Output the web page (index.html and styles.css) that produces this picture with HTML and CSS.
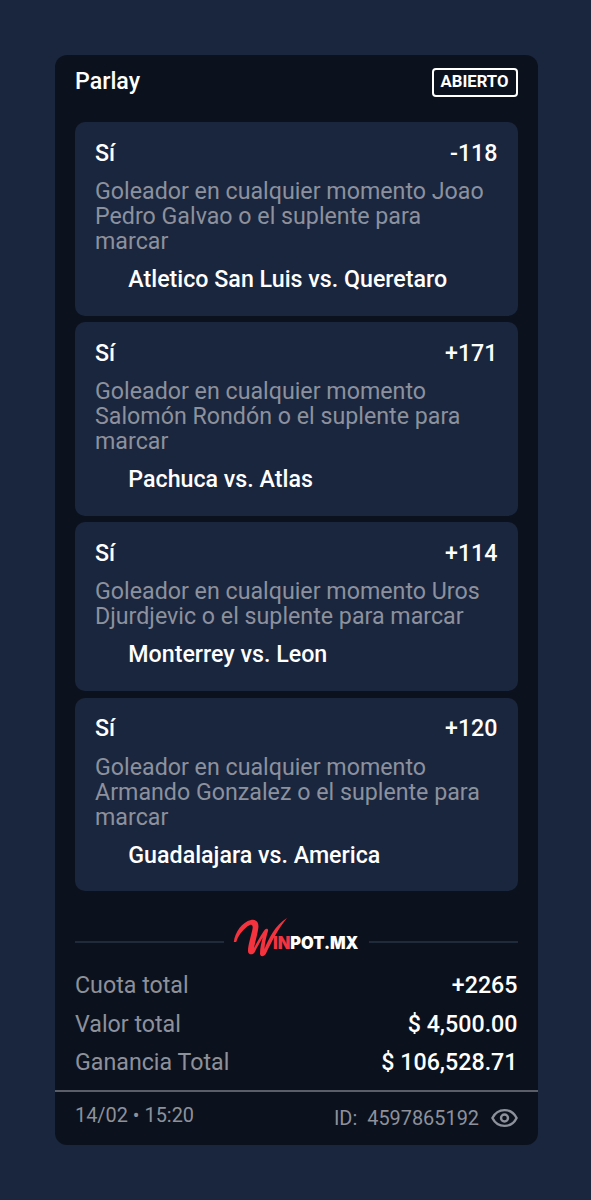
FILE: index.html
```html
<!DOCTYPE html>
<html lang="es">
<head>
    <meta charset="UTF-8">
    <meta name="viewport" content="width=device-width, initial-scale=1.0">
    <title>Parlay</title>
    <link rel="stylesheet" href="styles.css">
</head>
<body>
    <div class="ticket">
        <div class="header">
            <div class="title">Parlay</div>
            <div class="status">ABIERTO</div>
        </div>

        <div class="bets">
            <div class="bet">
                <div class="row"><span>Sí</span><span>-118</span></div>
                <div class="market">Goleador en cualquier momento Joao Pedro Galvao o el suplente para marcar</div>
                <div class="match">Atletico San Luis vs. Queretaro</div>
            </div>
            <div class="bet">
                <div class="row"><span>Sí</span><span>+171</span></div>
                <div class="market">Goleador en cualquier momento Salomón Rondón o el suplente para marcar</div>
                <div class="match">Pachuca vs. Atlas</div>
            </div>
            <div class="bet">
                <div class="row"><span>Sí</span><span>+114</span></div>
                <div class="market">Goleador en cualquier momento Uros Djurdjevic o el suplente para marcar</div>
                <div class="match">Monterrey vs. Leon</div>
            </div>
            <div class="bet">
                <div class="row"><span>Sí</span><span>+120</span></div>
                <div class="market">Goleador en cualquier momento Armando Gonzalez o el suplente para marcar</div>
                <div class="match">Guadalajara vs. America</div>
            </div>
        </div>

        <div class="brand">
            <svg class="logo" viewBox="0 0 126 42" width="126" height="42">
                <path fill="#f5333f" d="M0.800 25C2 15 9 5 18 3C24 2 26 6 25.300 11C24.500 17 22 26 21 31C24 25 28.500 17 32 12.500C33.500 11 35.700 12 35 14C33.200 20 31.800 26 31.500 32C35.500 22 42 8 54 1C45 12 38.500 25 33 36.500C31 40 27 40 27 36.500C27 31 28.500 25 29.700 20.500C26.500 26 24 30.500 21.800 35C20 38.500 15 38 15 34C15 28 18 19 19.500 12C20.300 7.500 18.500 6.300 14.500 9.300C9 13.500 5 19 3.200 25Z"/>
                <text x="40" y="31.600" textLength="85.500" lengthAdjust="spacingAndGlyphs"><tspan class="logo-in">IN</tspan>POT.MX</text>
            </svg>
        </div>

        <div class="totals">
            <div class="total"><span>Cuota total</span><b>+2265</b></div>
            <div class="total"><span>Valor total</span><b>$ 4,500.00</b></div>
            <div class="total"><span>Ganancia Total</span><b>$ 106,528.71</b></div>
        </div>

        <div class="footer">
            <div class="date">14/02 • 15:20</div>
            <div class="ticket-id">
                <span>ID:</span>
                <span class="number">4597865192</span>
                <svg class="eye" viewBox="0 0 27 20" width="27" height="20" fill="none" stroke="#8d919b" stroke-width="2.400">
                    <path d="M1.400 10C4 4.800 8.300 2.100 13.500 2.100S23 4.800 25.600 10C23 15.200 18.700 17.900 13.500 17.900S4 15.200 1.400 10Z" stroke-linejoin="round"/>
                    <circle cx="13.500" cy="10" r="3.500"/>
                </svg>
            </div>
        </div>
    </div>
</body>
</html>
```
FILE: styles.css
```css
body {
    margin: 0;
    background: #1a263e;
    font-family: Roboto, sans-serif;
    font-size: 23.23px;
    line-height: 25px;
    color: #fff;
}
.ticket {
    box-sizing: border-box;
    width: 482.5px;
    height: 1089.5px;
    margin: 55px 0 0 55px;
    border-radius: 12px;
    background: #0c121d;
}
.header {
    display: flex;
    justify-content: space-between;
    align-items: flex-start;
    height: 53px;
    padding: 14px 20px 0;
}
.title {
    font-weight: 500;
}
.status {
    box-sizing: border-box;
    width: 86px;
    height: 29px;
    margin-top: -1px;
    border: 2px solid #fff;
    border-radius: 4px;
    font-size: 16.67px;
    font-weight: 700;
    line-height: 24px;
    text-align: center;
}
.bets {
    display: flex;
    flex-direction: column;
    gap: 6.6px;
    padding: 0 20px;
}
.bet {
    padding: 18.5px 20px 23.5px;
    border-radius: 10px;
    background: #1a263e;
}
.row {
    display: flex;
    justify-content: space-between;
    font-weight: 500;
}
.market {
    margin: 13.6px 0 13px;
    color: #8c919d;
}
.match {
    padding-left: 33.3px;
    font-weight: 500;
}
.brand {
    display: flex;
    align-items: center;
    gap: 9.5px;
    height: 42px;
    margin-top: 30px;
    padding: 0 20px;
}
.brand::before,
.brand::after {
    content: "";
    flex: 1;
    height: 2px;
    background: #1f2b3a;
}
.logo {
    margin-top: -8px;
}
.logo text {
    font-family: Inter, sans-serif;
    font-size: 16.8px;
    font-weight: 900;
    fill: #fff;
}
.logo .logo-in {
    fill: #f5333f;
}
.totals {
    display: flex;
    flex-direction: column;
    gap: 13.4px;
    margin-top: 10px;
    padding: 0 20px 15px;
}
.total {
    display: flex;
    justify-content: space-between;
    color: #8d919b;
}
.total b {
    font-weight: 500;
    color: #fff;
}
.footer {
    display: flex;
    justify-content: space-between;
    padding: 11px 20px 0;
    border-top: 2px solid #5a5e66;
    font-size: 19.9px;
    color: #8d919b;
}
.ticket-id {
    display: flex;
    align-items: center;
    margin-top: 3px;
}
.number {
    margin: 0 11.5px 0 10px;
}
```
